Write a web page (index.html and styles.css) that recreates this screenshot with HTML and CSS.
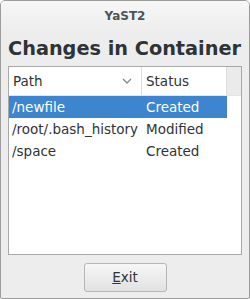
FILE: index.html
```html
<!DOCTYPE html>
<html lang="en">
<head>
  <meta charset="UTF-8">
  <title>YaST2</title>
  <link rel="stylesheet" href="styles.css">
</head>
<body>
  <div class="window">
    <div class="titlebar">YaST2</div>
    <div class="content">
      <h1 class="heading">Changes in Container</h1>
      <div class="table">
        <div class="thead">
          <div class="th th-path">
            <span>Path</span>
            <svg class="chevron" width="10" height="6" viewBox="0 0 10 6">
              <path d="M1 1 L5 5 L9 1" fill="none" stroke="#8a8a8a" stroke-width="1.4"/>
            </svg>
          </div>
          <div class="th th-status">Status</div>
          <div class="th-scroll"></div>
        </div>
        <div class="row selected">
          <div class="cell cell-path">/newfile</div>
          <div class="cell">Created</div>
        </div>
        <div class="row">
          <div class="cell cell-path">/root/.bash_history</div>
          <div class="cell">Modified</div>
        </div>
        <div class="row">
          <div class="cell cell-path">/space</div>
          <div class="cell">Created</div>
        </div>
      </div>
      <div class="buttons">
        <button class="btn"><u>E</u>xit</button>
      </div>
    </div>
  </div>
</body>
</html>
```
FILE: styles.css
```css
html, body {
  margin: 0;
  padding: 0;
}

body {
  width: 250px;
  height: 299px;
  font-family: "DejaVu Sans", sans-serif;
  color: #2e3436;
}

.window {
  box-sizing: border-box;
  width: 250px;
  height: 299px;
  background: #ededed;
  border: 1px solid #9c9c9c;
  border-radius: 5px 5px 2px 2px;
  display: flex;
  flex-direction: column;
  overflow: hidden;
}

.titlebar {
  height: 30px;
  line-height: 30px;
  text-align: center;
  font-size: 12px;
  font-weight: bold;
  color: #4b5557;
  background: linear-gradient(#f7f7f7, #ededed);
}

.content {
  flex: 1;
  display: flex;
  flex-direction: column;
  padding: 0 7px 0 7px;
}

.heading {
  margin: 4px 0 0 0;
  height: 31px;
  font-size: 19.3px;
  line-height: 28px;
  font-weight: bold;
  color: #2e3436;
  white-space: nowrap;
}

.table {
  height: 189px;
  box-sizing: border-box;
  border: 1px solid #a8a8a8;
  background: #fff;
  font-size: 13.5px;
}

.thead {
  display: flex;
  height: 28px;
  border-bottom: 1px solid #e4e4e4;
}

.th {
  display: flex;
  align-items: center;
  padding-left: 4px;
  box-sizing: border-box;
  color: #2e3436;
}

.th-path {
  width: 133px;
  justify-content: space-between;
  padding-right: 9px;
  border-right: 1px solid #dcdcdc;
}

.th-status {
  width: 85px;
  border-right: 1px solid #dcdcdc;
}

.th-scroll {
  flex: 1;
  background: #ebebeb;
}

.row {
  display: flex;
  height: 22px;
  align-items: center;
  width: 218px;
}

.row.selected {
  background: #3d85cf;
  color: #fff;
}

.cell {
  padding-left: 3px;
  white-space: nowrap;
}

.cell-path {
  width: 134px;
  box-sizing: border-box;
}

.buttons {
  flex: 1;
  display: flex;
  justify-content: center;
  align-items: center;
}

.btn {
  width: 83px;
  height: 29px;
  font-family: "DejaVu Sans", sans-serif;
  font-size: 13.5px;
  color: #2e3436;
  border: 1px solid #b6b6b6;
  border-radius: 3px;
  background: linear-gradient(#f6f6f6, #e2e2e2);
  margin-top: 1px;
}

.btn u {
  text-decoration-thickness: 1px;
}
```
